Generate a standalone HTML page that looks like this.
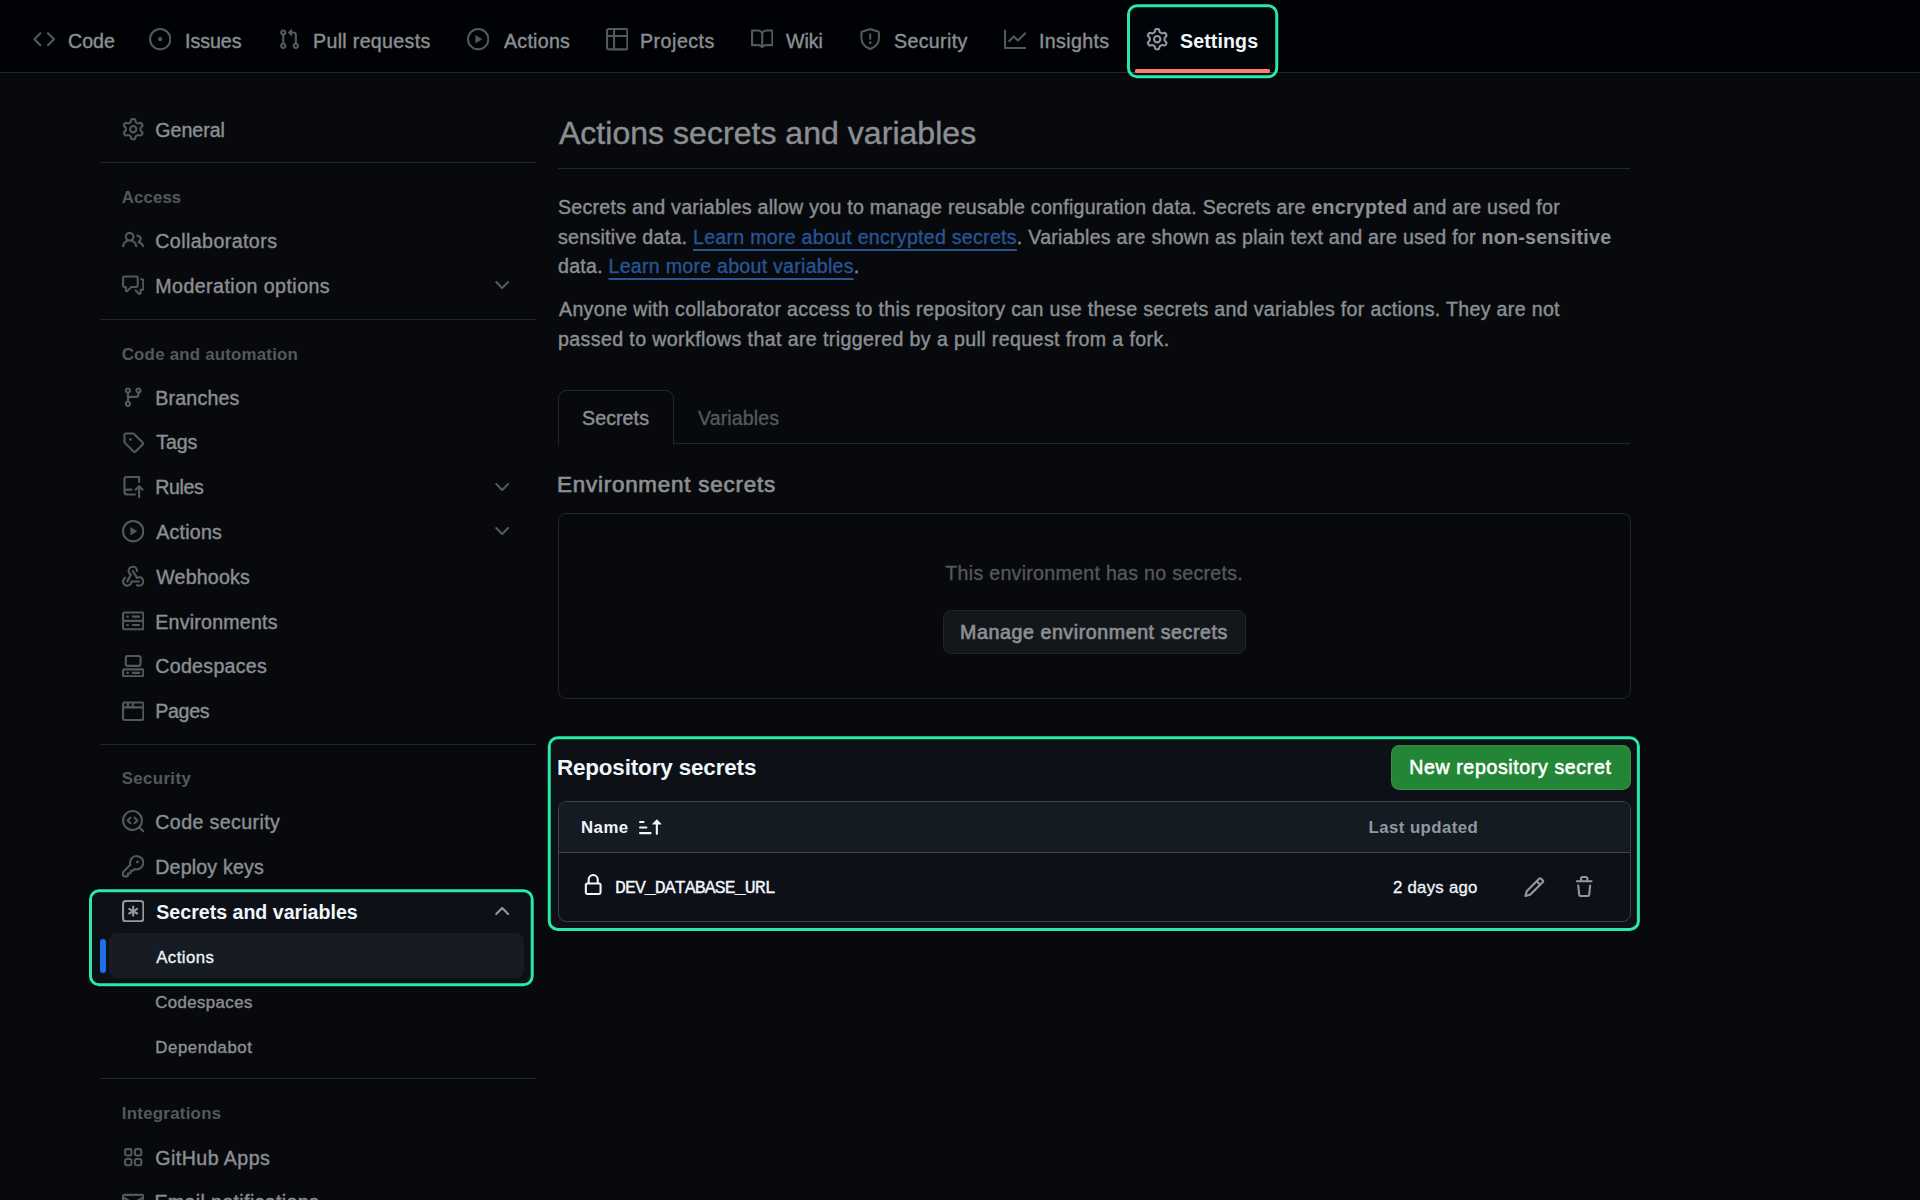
<!DOCTYPE html>
<html><head><meta charset="utf-8"><style>
html,body{margin:0;padding:0;width:1920px;height:1200px;overflow:hidden;background:#0d1117;}
body{position:relative;font-family:"Liberation Sans",sans-serif;}
.t{position:absolute;white-space:nowrap;}
.w4{-webkit-text-stroke:0.3px currentColor;}
.w4 b{-webkit-text-stroke:0;}
.w6{font-weight:400 !important;-webkit-text-stroke:0.6px currentColor;}
.t b{font-weight:700;}
.t a{color:#4493f8;text-decoration:underline;text-underline-offset:4.6px;text-decoration-thickness:1.6px;}
.r{position:absolute;box-sizing:border-box;}
.i{position:absolute;}
</style></head><body>
<div class="r" style="left:0px;top:0px;width:1920px;height:72px;background:#010409;"></div>
<div class="r" style="left:0px;top:72px;width:1920px;height:1px;background:#3d444d;"></div>
<svg class="i" style="left:33.2px;top:28.4px;width:22.4px;height:22.4px" viewBox="0 0 16 16"><path fill="#9198a1" d="M4.72 3.22a.75.75 0 0 1 1.06 1.06L2.06 8l3.72 3.72a.75.75 0 1 1-1.06 1.06L.47 8.53a.75.75 0 0 1 0-1.06Zm6.56 0a.75.75 0 1 0-1.06 1.06L13.94 8l-3.72 3.72a.75.75 0 1 0 1.06 1.06l4.25-4.25a.75.75 0 0 0 0-1.06Z"/></svg>
<div class="t w4" id="t1" style="top:31.50px;font-size:19.6px;line-height:19.6px;color:#f0f6fc;font-weight:400;font-family:'Liberation Sans', sans-serif;letter-spacing:0.034px;left:68.0px;">Code</div>
<svg class="i" style="left:149.0px;top:28.4px;width:22.4px;height:22.4px" viewBox="0 0 16 16"><path fill="#9198a1" d="M8 9.5a1.5 1.5 0 1 0 0-3 1.5 1.5 0 0 0 0 3ZM8 0a8 8 0 1 1 0 16A8 8 0 0 1 8 0ZM1.5 8a6.5 6.5 0 1 0 13 0 6.5 6.5 0 0 0-13 0Z"/></svg>
<div class="t w4" id="t2" style="top:31.50px;font-size:19.6px;line-height:19.6px;color:#f0f6fc;font-weight:400;font-family:'Liberation Sans', sans-serif;letter-spacing:-0.020px;left:185.0px;">Issues</div>
<svg class="i" style="left:277.9px;top:28.4px;width:22.4px;height:22.4px" viewBox="0 0 16 16"><path fill="#9198a1" d="M1.5 3.25a2.25 2.25 0 1 1 3 2.122v5.256a2.251 2.251 0 1 1-1.5 0V5.372A2.25 2.25 0 0 1 1.5 3.25Zm5.677-.177L9.573.677A.25.25 0 0 1 10 .854V2.5h1A2.5 2.5 0 0 1 13.5 5v5.628a2.251 2.251 0 1 1-1.5 0V5a1 1 0 0 0-1-1h-1v1.646a.25.25 0 0 1-.427.177L7.177 3.427a.25.25 0 0 1 0-.354ZM3.75 2.5a.75.75 0 1 0 0 1.5.75.75 0 0 0 0-1.5Zm0 9.5a.75.75 0 1 0 0 1.5.75.75 0 0 0 0-1.5Zm8.25.75a.75.75 0 1 0 1.5 0 .75.75 0 0 0-1.5 0Z"/></svg>
<div class="t w4" id="t3" style="top:31.50px;font-size:19.6px;line-height:19.6px;color:#f0f6fc;font-weight:400;font-family:'Liberation Sans', sans-serif;letter-spacing:0.333px;left:313.0px;">Pull requests</div>
<svg class="i" style="left:467.1px;top:28.4px;width:22.4px;height:22.4px" viewBox="0 0 16 16"><path fill="#9198a1" d="M8 0a8 8 0 1 1 0 16A8 8 0 0 1 8 0ZM1.5 8a6.5 6.5 0 1 0 13 0 6.5 6.5 0 0 0-13 0Zm4.879-2.773 4.264 2.559a.25.25 0 0 1 0 .428l-4.264 2.559A.25.25 0 0 1 6 10.559V5.442a.25.25 0 0 1 .379-.215Z"/></svg>
<div class="t w4" id="t4" style="top:31.50px;font-size:19.6px;line-height:19.6px;color:#f0f6fc;font-weight:400;font-family:'Liberation Sans', sans-serif;letter-spacing:0.267px;left:504.0px;">Actions</div>
<svg class="i" style="left:606.0px;top:28.4px;width:22.4px;height:22.4px" viewBox="0 0 16 16"><path fill="#9198a1" d="M0 1.75C0 .784.784 0 1.75 0h12.5C15.216 0 16 .784 16 1.75v12.5A1.75 1.75 0 0 1 14.25 16H1.75A1.75 1.75 0 0 1 0 14.25ZM6.5 6.5v8h7.75a.25.25 0 0 0 .25-.25V6.5Zm8-1.5V1.75a.25.25 0 0 0-.25-.25H6.5V5Zm-13 1.5v7.75c0 .138.112.25.25.25H5v-8ZM5 5V1.5H1.75a.25.25 0 0 0-.25.25V5Z"/></svg>
<div class="t w4" id="t5" style="top:31.50px;font-size:19.6px;line-height:19.6px;color:#f0f6fc;font-weight:400;font-family:'Liberation Sans', sans-serif;letter-spacing:0.514px;left:640.0px;">Projects</div>
<svg class="i" style="left:750.6px;top:28.4px;width:22.4px;height:22.4px" viewBox="0 0 16 16"><path fill="#9198a1" d="M0 1.75A.75.75 0 0 1 .75 1h4.253c1.227 0 2.317.59 3 1.501A3.743 3.743 0 0 1 11.006 1h4.245a.75.75 0 0 1 .75.75v10.5a.75.75 0 0 1-.75.75h-4.507a2.25 2.25 0 0 0-1.591.659l-.622.621a.75.75 0 0 1-1.06 0l-.622-.621A2.25 2.25 0 0 0 5.258 13H.75a.75.75 0 0 1-.75-.75Zm7.251 10.324.004-5.073-.002-2.253A2.25 2.25 0 0 0 5.003 2.5H1.5v9h3.757a3.75 3.75 0 0 1 1.994.574ZM8.755 4.75l-.004 7.322a3.752 3.752 0 0 1 1.992-.572H14.5v-9h-3.495a2.25 2.25 0 0 0-2.25 2.25Z"/></svg>
<div class="t w4" id="t6" style="top:31.50px;font-size:19.6px;line-height:19.6px;color:#f0f6fc;font-weight:400;font-family:'Liberation Sans', sans-serif;letter-spacing:-0.034px;left:786.0px;">Wiki</div>
<svg class="i" style="left:859.2px;top:28.4px;width:22.4px;height:22.4px" viewBox="0 0 16 16"><path fill="#9198a1" d="M7.467.133a1.748 1.748 0 0 1 1.066 0l5.25 1.68A1.75 1.75 0 0 1 15 3.48V7c0 1.566-.32 3.182-1.303 4.682-.983 1.498-2.585 2.813-5.032 3.855a1.697 1.697 0 0 1-1.33 0c-2.447-1.042-4.049-2.357-5.032-3.855C1.32 10.182 1 8.566 1 7V3.48a1.755 1.755 0 0 1 1.217-1.667Zm.61 1.429a.25.25 0 0 0-.153 0l-5.25 1.68a.25.25 0 0 0-.174.238V7c0 1.358.275 2.666 1.057 3.86.784 1.194 2.121 2.34 4.366 3.297a.196.196 0 0 0 .154 0c2.245-.956 3.582-2.104 4.366-3.298C13.225 9.666 13.5 8.36 13.5 7V3.48a.251.251 0 0 0-.174-.237l-5.25-1.68ZM8.75 4.75v3a.75.75 0 0 1-1.5 0v-3a.75.75 0 0 1 1.5 0ZM9 10.5a1 1 0 1 1-2 0 1 1 0 0 1 2 0Z"/></svg>
<div class="t w4" id="t7" style="top:31.50px;font-size:19.6px;line-height:19.6px;color:#f0f6fc;font-weight:400;font-family:'Liberation Sans', sans-serif;letter-spacing:0.357px;left:894.0px;">Security</div>
<svg class="i" style="left:1004.1px;top:28.4px;width:22.4px;height:22.4px" viewBox="0 0 16 16"><path fill="#9198a1" d="M1.5 1.75V13.5h13.75a.75.75 0 0 1 0 1.5H.75a.75.75 0 0 1-.75-.75V1.75a.75.75 0 0 1 1.5 0Zm14.28 2.53-5.25 5.25a.75.75 0 0 1-1.06 0L7 7.06 4.28 9.78a.751.751 0 0 1-1.042-.018.751.751 0 0 1-.018-1.042l3.25-3.25a.75.75 0 0 1 1.06 0L10 7.94l4.72-4.72a.751.751 0 0 1 1.042.018.751.751 0 0 1 .018 1.042Z"/></svg>
<div class="t w4" id="t8" style="top:31.50px;font-size:19.6px;line-height:19.6px;color:#f0f6fc;font-weight:400;font-family:'Liberation Sans', sans-serif;letter-spacing:0.357px;left:1039.0px;">Insights</div>
<svg class="i" style="left:1146.2px;top:28.4px;width:22.4px;height:22.4px" viewBox="0 0 16 16"><path fill="#9198a1" d="M8 0a8.2 8.2 0 0 1 .701.031C9.444.095 9.99.645 10.16 1.29l.288 1.107c.018.066.079.158.212.224.231.114.454.243.668.386.123.082.233.09.299.071l1.103-.303c.644-.176 1.392.021 1.82.63.27.385.506.792.704 1.218.315.675.111 1.422-.364 1.891l-.814.806c-.049.048-.098.147-.088.294.016.257.016.515 0 .772-.01.147.038.246.088.294l.814.806c.475.469.679 1.216.364 1.891a7.977 7.977 0 0 1-.704 1.217c-.428.61-1.176.807-1.82.63l-1.102-.302c-.067-.019-.177-.011-.3.071a5.909 5.909 0 0 1-.668.386c-.133.066-.194.158-.211.224l-.29 1.106c-.168.646-.715 1.196-1.458 1.26a8.006 8.006 0 0 1-1.402 0c-.743-.064-1.289-.614-1.458-1.26l-.289-1.106c-.018-.066-.079-.158-.212-.224a5.738 5.738 0 0 1-.668-.386c-.123-.082-.233-.09-.299-.071l-1.103.303c-.644.176-1.392-.021-1.82-.63a8.12 8.12 0 0 1-.704-1.218c-.315-.675-.111-1.422.363-1.891l.815-.806c.05-.048.098-.147.088-.294a6.214 6.214 0 0 1 0-.772c.01-.147-.038-.246-.088-.294l-.815-.806C.635 6.045.431 5.298.746 4.623a7.92 7.92 0 0 1 .704-1.217c.428-.61 1.176-.807 1.82-.63l1.102.302c.067.019.177.011.3-.071.214-.143.437-.272.668-.386.133-.066.194-.158.211-.224l.29-1.106C6.009.645 6.556.095 7.299.03 7.53.01 7.764 0 8 0Zm-.571 1.525c-.036.003-.108.036-.137.146l-.289 1.105c-.147.561-.549.967-.998 1.189-.173.086-.34.183-.5.29-.417.278-.97.423-1.529.27l-1.103-.303c-.109-.03-.175.016-.195.045-.22.312-.412.644-.573.99-.014.031-.021.11.059.19l.815.806c.411.406.562.957.53 1.456a4.709 4.709 0 0 0 0 .582c.032.499-.119 1.05-.53 1.456l-.815.806c-.081.08-.073.159-.059.19.162.346.353.677.573.989.02.03.085.076.195.046l1.102-.303c.56-.153 1.113-.008 1.53.27.161.107.328.204.501.29.447.222.85.629.997 1.189l.289 1.105c.029.109.101.143.137.146a6.6 6.6 0 0 0 1.142 0c.036-.003.108-.036.137-.146l.289-1.105c.147-.561.549-.967.998-1.189.173-.086.34-.183.5-.29.417-.278.97-.423 1.529-.27l1.103.303c.109.029.175-.016.195-.045.22-.313.411-.644.573-.99.014-.031.021-.11-.059-.19l-.815-.806c-.411-.406-.562-.957-.53-1.456a4.709 4.709 0 0 0 0-.582c-.032-.499.119-1.05.53-1.456l.815-.806c.081-.08.073-.159.059-.19a6.464 6.464 0 0 0-.573-.989c-.02-.03-.085-.076-.195-.046l-1.102.303c-.56.153-1.113.008-1.53-.27a4.44 4.44 0 0 0-.501-.29c-.447-.222-.85-.629-.997-1.189l-.289-1.105c-.029-.11-.101-.143-.137-.146a6.6 6.6 0 0 0-1.142 0ZM11 8a3 3 0 1 1-6 0 3 3 0 0 1 6 0ZM9.5 8a1.5 1.5 0 1 0-3.001.001A1.5 1.5 0 0 0 9.5 8Z"/></svg>
<div class="t" id="t9" style="top:31.50px;font-size:19.6px;line-height:19.6px;color:#f0f6fc;font-weight:700;font-family:'Liberation Sans', sans-serif;letter-spacing:0.115px;left:1180.0px;">Settings</div>
<div class="r" style="left:1135px;top:69.3px;width:135px;height:3.6000000000000085px;background:#f78166;border-radius:1.5px;"></div>
<svg class="i" style="left:122px;top:118.30000000000001px;width:22.4px;height:22.4px" viewBox="0 0 16 16"><path fill="#9198a1" d="M8 0a8.2 8.2 0 0 1 .701.031C9.444.095 9.99.645 10.16 1.29l.288 1.107c.018.066.079.158.212.224.231.114.454.243.668.386.123.082.233.09.299.071l1.103-.303c.644-.176 1.392.021 1.82.63.27.385.506.792.704 1.218.315.675.111 1.422-.364 1.891l-.814.806c-.049.048-.098.147-.088.294.016.257.016.515 0 .772-.01.147.038.246.088.294l.814.806c.475.469.679 1.216.364 1.891a7.977 7.977 0 0 1-.704 1.217c-.428.61-1.176.807-1.82.63l-1.102-.302c-.067-.019-.177-.011-.3.071a5.909 5.909 0 0 1-.668.386c-.133.066-.194.158-.211.224l-.29 1.106c-.168.646-.715 1.196-1.458 1.26a8.006 8.006 0 0 1-1.402 0c-.743-.064-1.289-.614-1.458-1.26l-.289-1.106c-.018-.066-.079-.158-.212-.224a5.738 5.738 0 0 1-.668-.386c-.123-.082-.233-.09-.299-.071l-1.103.303c-.644.176-1.392-.021-1.82-.63a8.12 8.12 0 0 1-.704-1.218c-.315-.675-.111-1.422.363-1.891l.815-.806c.05-.048.098-.147.088-.294a6.214 6.214 0 0 1 0-.772c.01-.147-.038-.246-.088-.294l-.815-.806C.635 6.045.431 5.298.746 4.623a7.92 7.92 0 0 1 .704-1.217c.428-.61 1.176-.807 1.82-.63l1.102.302c.067.019.177.011.3-.071.214-.143.437-.272.668-.386.133-.066.194-.158.211-.224l.29-1.106C6.009.645 6.556.095 7.299.03 7.53.01 7.764 0 8 0Zm-.571 1.525c-.036.003-.108.036-.137.146l-.289 1.105c-.147.561-.549.967-.998 1.189-.173.086-.34.183-.5.29-.417.278-.97.423-1.529.27l-1.103-.303c-.109-.03-.175.016-.195.045-.22.312-.412.644-.573.99-.014.031-.021.11.059.19l.815.806c.411.406.562.957.53 1.456a4.709 4.709 0 0 0 0 .582c.032.499-.119 1.05-.53 1.456l-.815.806c-.081.08-.073.159-.059.19.162.346.353.677.573.989.02.03.085.076.195.046l1.102-.303c.56-.153 1.113-.008 1.53.27.161.107.328.204.501.29.447.222.85.629.997 1.189l.289 1.105c.029.109.101.143.137.146a6.6 6.6 0 0 0 1.142 0c.036-.003.108-.036.137-.146l.289-1.105c.147-.561.549-.967.998-1.189.173-.086.34-.183.5-.29.417-.278.97-.423 1.529-.27l1.103.303c.109.029.175-.016.195-.045.22-.313.411-.644.573-.99.014-.031.021-.11-.059-.19l-.815-.806c-.411-.406-.562-.957-.53-1.456a4.709 4.709 0 0 0 0-.582c-.032-.499.119-1.05.53-1.456l.815-.806c.081-.08.073-.159.059-.19a6.464 6.464 0 0 0-.573-.989c-.02-.03-.085-.076-.195-.046l-1.102.303c-.56.153-1.113.008-1.53-.27a4.44 4.44 0 0 0-.501-.29c-.447-.222-.85-.629-.997-1.189l-.289-1.105c-.029-.11-.101-.143-.137-.146a6.6 6.6 0 0 0-1.142 0ZM11 8a3 3 0 1 1-6 0 3 3 0 0 1 6 0ZM9.5 8a1.5 1.5 0 1 0-3.001.001A1.5 1.5 0 0 0 9.5 8Z"/></svg>
<div class="t w4" id="t10" style="top:120.90px;font-size:19.6px;line-height:19.6px;color:#f0f6fc;font-weight:400;font-family:'Liberation Sans', sans-serif;letter-spacing:-0.009px;left:155.3px;">General</div>
<div class="r" style="left:100px;top:162px;width:436px;height:1px;background:#3d444d;"></div>
<div class="t" id="t11" style="top:190.10px;font-size:16.8px;line-height:16.8px;color:#9198a1;font-weight:700;font-family:'Liberation Sans', sans-serif;letter-spacing:0.130px;left:121.75px;">Access</div>
<svg class="i" style="left:122px;top:229.4px;width:22.4px;height:22.4px" viewBox="0 0 16 16"><path fill="#9198a1" d="M2 5.5a3.5 3.5 0 1 1 5.898 2.549 5.508 5.508 0 0 1 3.034 4.084.75.75 0 1 1-1.482.235 4 4 0 0 0-7.9 0 .75.75 0 0 1-1.482-.236A5.507 5.507 0 0 1 3.102 8.05 3.493 3.493 0 0 1 2 5.5ZM11 4a3.001 3.001 0 0 1 2.22 5.018 5.01 5.01 0 0 1 2.56 3.012.749.749 0 0 1-.885.954.752.752 0 0 1-.549-.514 3.507 3.507 0 0 0-2.522-2.372.75.75 0 0 1-.574-.73v-.352a.75.75 0 0 1 .416-.672A1.5 1.5 0 0 0 11 5.5.75.75 0 0 1 11 4Zm-5.5-.5a2 2 0 1 0-.001 3.999A2 2 0 0 0 5.5 3.5Z"/></svg>
<div class="t w4" id="t12" style="top:232.00px;font-size:19.6px;line-height:19.6px;color:#f0f6fc;font-weight:400;font-family:'Liberation Sans', sans-serif;letter-spacing:0.425px;left:155.3px;">Collaborators</div>
<svg class="i" style="left:122px;top:274.29999999999995px;width:22.4px;height:22.4px" viewBox="0 0 16 16"><path fill="#9198a1" d="M1.75 1h8.5c.966 0 1.75.784 1.75 1.75v5.5A1.75 1.75 0 0 1 10.25 10H7.061l-2.574 2.573A1.458 1.458 0 0 1 2 11.543V10h-.25A1.75 1.75 0 0 1 0 8.25v-5.5C0 1.784.784 1 1.75 1ZM1.5 2.75v5.5c0 .138.112.25.25.25h1a.75.75 0 0 1 .75.75v2.19l2.72-2.72a.749.749 0 0 1 .53-.22h3.5a.25.25 0 0 0 .25-.25v-5.5a.25.25 0 0 0-.25-.25h-8.5a.25.25 0 0 0-.25.25Zm13 2a.25.25 0 0 0-.25-.25h-.5a.75.75 0 0 1 0-1.5h.5c.966 0 1.75.784 1.75 1.75v5.5A1.75 1.75 0 0 1 14.25 12H14v1.543a1.458 1.458 0 0 1-2.487 1.03L9.22 12.28a.749.749 0 0 1 .326-1.275.749.749 0 0 1 .734.215l2.22 2.22v-2.19a.75.75 0 0 1 .75-.75h1a.25.25 0 0 0 .25-.25Z"/></svg>
<div class="t w4" id="t13" style="top:276.90px;font-size:19.6px;line-height:19.6px;color:#f0f6fc;font-weight:400;font-family:'Liberation Sans', sans-serif;letter-spacing:0.452px;left:155.3px;">Moderation options</div>
<svg class="i" style="left:490.6px;top:274.29999999999995px;width:22.4px;height:22.4px" viewBox="0 0 16 16"><path fill="#9198a1" d="M12.78 5.22a.749.749 0 0 1 0 1.06l-4.25 4.25a.749.749 0 0 1-1.06 0L3.22 6.28a.749.749 0 1 1 1.06-1.06L8 8.939l3.72-3.719a.749.749 0 0 1 1.06 0Z"/></svg>
<div class="r" style="left:100px;top:318.5px;width:436px;height:1.0px;background:#3d444d;"></div>
<div class="t" id="t14" style="top:346.80px;font-size:16.8px;line-height:16.8px;color:#9198a1;font-weight:700;font-family:'Liberation Sans', sans-serif;letter-spacing:0.252px;left:121.75px;">Code and automation</div>
<svg class="i" style="left:122px;top:385.9px;width:22.4px;height:22.4px" viewBox="0 0 16 16"><path fill="#9198a1" d="M9.5 3.25a2.25 2.25 0 1 1 3 2.122V6A2.5 2.5 0 0 1 10 8.5H6a1 1 0 0 0-1 1v1.128a2.251 2.251 0 1 1-1.5 0V5.372a2.25 2.25 0 1 1 1.5 0v1.836A2.493 2.493 0 0 1 6 7h4a1 1 0 0 0 1-1v-.628A2.25 2.25 0 0 1 9.5 3.25Zm-6 0a.75.75 0 1 0 1.5 0 .75.75 0 0 0-1.5 0Zm8.25-.75a.75.75 0 1 0 0 1.5.75.75 0 0 0 0-1.5ZM4.25 12a.75.75 0 1 0 0 1.5.75.75 0 0 0 0-1.5Z"/></svg>
<div class="t w4" id="t15" style="top:388.50px;font-size:19.6px;line-height:19.6px;color:#f0f6fc;font-weight:400;font-family:'Liberation Sans', sans-serif;letter-spacing:0.186px;left:155.3px;">Branches</div>
<svg class="i" style="left:122px;top:430.7px;width:22.4px;height:22.4px" viewBox="0 0 16 16"><path fill="#9198a1" d="M1 7.775V2.75C1 1.784 1.784 1 2.75 1h5.025c.464 0 .91.184 1.238.513l6.25 6.25a1.75 1.75 0 0 1 0 2.474l-5.026 5.026a1.75 1.75 0 0 1-2.474 0l-6.25-6.25A1.752 1.752 0 0 1 1 7.775Zm1.5 0c0 .066.026.13.073.177l6.25 6.25a.25.25 0 0 0 .354 0l5.025-5.025a.25.25 0 0 0 0-.354l-6.25-6.25a.25.25 0 0 0-.177-.073H2.75a.25.25 0 0 0-.25.25ZM6 5a1 1 0 1 1 0 2 1 1 0 0 1 0-2Z"/></svg>
<div class="t w4" id="t16" style="top:433.30px;font-size:19.6px;line-height:19.6px;color:#f0f6fc;font-weight:400;font-family:'Liberation Sans', sans-serif;letter-spacing:-0.134px;left:156.3px;">Tags</div>
<svg class="i" style="left:122px;top:475.5px;width:22.4px;height:22.4px" viewBox="0 0 16 16"><path fill="#9198a1" d="M1 2.5A2.5 2.5 0 0 1 3.5 0h8.75a.75.75 0 0 1 .75.75v3.5a.75.75 0 0 1-1.5 0V1.5h-8a1 1 0 0 0-1 1v6.708A2.492 2.492 0 0 1 3.5 9h3.25a.75.75 0 0 1 0 1.5H3.5a1 1 0 0 0 0 2h5.75a.75.75 0 0 1 0 1.5H3.5A2.5 2.5 0 0 1 1 11.5Zm13.23 7.79h-.001l-1.224-1.224v6.184a.75.75 0 0 1-1.5 0V9.066L10.28 10.29a.75.75 0 0 1-1.06-1.061l2.505-2.504a.75.75 0 0 1 1.06 0L15.29 9.23a.751.751 0 0 1-.018 1.042.751.751 0 0 1-1.042.018Z"/></svg>
<div class="t w4" id="t17" style="top:478.10px;font-size:19.6px;line-height:19.6px;color:#f0f6fc;font-weight:400;font-family:'Liberation Sans', sans-serif;letter-spacing:-0.375px;left:155.3px;">Rules</div>
<svg class="i" style="left:490.6px;top:475.5px;width:22.4px;height:22.4px" viewBox="0 0 16 16"><path fill="#9198a1" d="M12.78 5.22a.749.749 0 0 1 0 1.06l-4.25 4.25a.749.749 0 0 1-1.06 0L3.22 6.28a.749.749 0 1 1 1.06-1.06L8 8.939l3.72-3.719a.749.749 0 0 1 1.06 0Z"/></svg>
<svg class="i" style="left:122px;top:520.3px;width:22.4px;height:22.4px" viewBox="0 0 16 16"><path fill="#9198a1" d="M8 0a8 8 0 1 1 0 16A8 8 0 0 1 8 0ZM1.5 8a6.5 6.5 0 1 0 13 0 6.5 6.5 0 0 0-13 0Zm4.879-2.773 4.264 2.559a.25.25 0 0 1 0 .428l-4.264 2.559A.25.25 0 0 1 6 10.559V5.442a.25.25 0 0 1 .379-.215Z"/></svg>
<div class="t w4" id="t18" style="top:522.90px;font-size:19.6px;line-height:19.6px;color:#f0f6fc;font-weight:400;font-family:'Liberation Sans', sans-serif;letter-spacing:0.217px;left:156.3px;">Actions</div>
<svg class="i" style="left:490.6px;top:520.3px;width:22.4px;height:22.4px" viewBox="0 0 16 16"><path fill="#9198a1" d="M12.78 5.22a.749.749 0 0 1 0 1.06l-4.25 4.25a.749.749 0 0 1-1.06 0L3.22 6.28a.749.749 0 1 1 1.06-1.06L8 8.939l3.72-3.719a.749.749 0 0 1 1.06 0Z"/></svg>
<svg class="i" style="left:122px;top:565.0999999999999px;width:22.4px;height:22.4px" viewBox="0 0 16 16"><path fill="#9198a1" d="M5.5 4.25a2.25 2.25 0 0 1 4.5 0 .75.75 0 0 0 1.5 0 3.75 3.75 0 1 0-6.14 2.889l-2.272 4.258a.75.75 0 0 0 1.324.706L7 7.25a.75.75 0 0 0-.309-1.015A2.25 2.25 0 0 1 5.5 4.25ZM7.364 3.607a.75.75 0 0 1 1.03.257l2.608 4.349a3.75 3.75 0 1 1-.628 6.785.75.75 0 0 1 .752-1.299 2.25 2.25 0 1 0-.033-3.88.75.75 0 0 1-1.03-.256L7.107 4.636a.75.75 0 0 1 .257-1.03ZM2.9 8.776A.75.75 0 0 1 2.625 9.8 2.25 2.25 0 1 0 6 11.75a.75.75 0 0 1 .75-.751h5.5a.75.75 0 0 1 0 1.5H7.425a3.751 3.751 0 1 1-5.55-3.998.75.75 0 0 1 1.024.274Z"/></svg>
<div class="t w4" id="t19" style="top:567.70px;font-size:19.6px;line-height:19.6px;color:#f0f6fc;font-weight:400;font-family:'Liberation Sans', sans-serif;letter-spacing:0.171px;left:156.3px;">Webhooks</div>
<svg class="i" style="left:122px;top:609.8999999999999px;width:22.4px;height:22.4px" viewBox="0 0 16 16"><path fill="#9198a1" d="M1.75 1h12.5c.966 0 1.75.784 1.75 1.75v4c0 .372-.116.717-.314 1 .198.283.314.628.314 1v4a1.75 1.75 0 0 1-1.75 1.75H1.75A1.75 1.75 0 0 1 0 12.75v-4c0-.358.109-.707.314-1a1.739 1.739 0 0 1-.314-1v-4C0 1.784.784 1 1.75 1ZM1.5 2.75v4c0 .138.112.25.25.25h12.5a.25.25 0 0 0 .25-.25v-4a.25.25 0 0 0-.25-.25H1.75a.25.25 0 0 0-.25.25Zm.25 5.75a.25.25 0 0 0-.25.25v4c0 .138.112.25.25.25h12.5a.25.25 0 0 0 .25-.25v-4a.25.25 0 0 0-.25-.25ZM7 4.75A.75.75 0 0 1 7.75 4h4.5a.75.75 0 0 1 0 1.5h-4.5A.75.75 0 0 1 7 4.75ZM7.75 10h4.5a.75.75 0 0 1 0 1.5h-4.5a.75.75 0 0 1 0-1.5ZM3 4.75A.75.75 0 0 1 3.75 4h.5a.75.75 0 0 1 0 1.5h-.5A.75.75 0 0 1 3 4.75ZM3.75 10h.5a.75.75 0 0 1 0 1.5h-.5a.75.75 0 0 1 0-1.5Z"/></svg>
<div class="t w4" id="t20" style="top:612.50px;font-size:19.6px;line-height:19.6px;color:#f0f6fc;font-weight:400;font-family:'Liberation Sans', sans-serif;letter-spacing:0.217px;left:155.3px;">Environments</div>
<svg class="i" style="left:122px;top:654.6999999999998px;width:22.4px;height:22.4px" viewBox="0 0 16 16"><path fill="#9198a1" d="M0 11.25c0-.966.784-1.75 1.75-1.75h12.5c.966 0 1.75.784 1.75 1.75v3A1.75 1.75 0 0 1 14.25 16H1.75A1.75 1.75 0 0 1 0 14.25Zm2-9.5C2 .784 2.784 0 3.75 0h8.5C13.216 0 14 .784 14 1.75v5a1.75 1.75 0 0 1-1.75 1.75h-8.5A1.75 1.75 0 0 1 2 6.75Zm1.75-.25a.25.25 0 0 0-.25.25v5c0 .138.112.25.25.25h8.5a.25.25 0 0 0 .25-.25v-5a.25.25 0 0 0-.25-.25Zm-2 9.5a.25.25 0 0 0-.25.25v3c0 .138.112.25.25.25h12.5a.25.25 0 0 0 .25-.25v-3a.25.25 0 0 0-.25-.25ZM7 12.75a.75.75 0 0 1 .75-.75h4.5a.75.75 0 0 1 0 1.5h-4.5a.75.75 0 0 1-.75-.75Zm-4 0a.75.75 0 0 1 .75-.75h.5a.75.75 0 0 1 0 1.5h-.5a.75.75 0 0 1-.75-.75Z"/></svg>
<div class="t w4" id="t21" style="top:657.30px;font-size:19.6px;line-height:19.6px;color:#f0f6fc;font-weight:400;font-family:'Liberation Sans', sans-serif;letter-spacing:0.288px;left:155.3px;">Codespaces</div>
<svg class="i" style="left:122px;top:699.4999999999998px;width:22.4px;height:22.4px" viewBox="0 0 16 16"><path fill="#9198a1" d="M0 2.75C0 1.784.784 1 1.75 1h12.5c.966 0 1.75.784 1.75 1.75v10.5A1.75 1.75 0 0 1 14.25 15H1.75A1.75 1.75 0 0 1 0 13.25ZM14.5 6h-13v7.25c0 .138.112.25.25.25h12.5a.25.25 0 0 0 .25-.25Zm-6-3.5v2h6V2.75a.25.25 0 0 0-.25-.25ZM5 2.5v2h2v-2Zm-3.25 0a.25.25 0 0 0-.25.25V4.5h2v-2Z"/></svg>
<div class="t w4" id="t22" style="top:702.10px;font-size:19.6px;line-height:19.6px;color:#f0f6fc;font-weight:400;font-family:'Liberation Sans', sans-serif;letter-spacing:-0.325px;left:155.3px;">Pages</div>
<div class="r" style="left:100px;top:743.7px;width:436px;height:1.0px;background:#3d444d;"></div>
<div class="t" id="t23" style="top:771.20px;font-size:16.8px;line-height:16.8px;color:#9198a1;font-weight:700;font-family:'Liberation Sans', sans-serif;letter-spacing:0.393px;left:121.75px;">Security</div>
<svg class="i" style="left:122px;top:810.4px;width:22.4px;height:22.4px" viewBox="0 0 16 16"><path fill="#9198a1" d="M8.47 4.97a.75.75 0 0 0 0 1.06L9.94 7.5 8.47 8.97a.75.75 0 1 0 1.06 1.06l2-2a.75.75 0 0 0 0-1.06l-2-2a.75.75 0 0 0-1.06 0ZM6.53 6.03a.75.75 0 0 0-1.06-1.06l-2 2a.75.75 0 0 0 0 1.06l2 2a.75.75 0 1 0 1.06-1.06L5.06 7.5l1.47-1.47ZM12.246 13.307a7.501 7.501 0 1 1 1.06-1.06l2.474 2.473a.752.752 0 0 1-.018 1.042.752.752 0 0 1-1.042.018ZM1.5 7.5a6 6 0 1 0 12 0 6 6 0 0 0-12 0Z"/></svg>
<div class="t w4" id="t24" style="top:813.00px;font-size:19.6px;line-height:19.6px;color:#f0f6fc;font-weight:400;font-family:'Liberation Sans', sans-serif;letter-spacing:0.392px;left:155.3px;">Code security</div>
<svg class="i" style="left:122px;top:855.1999999999999px;width:22.4px;height:22.4px" viewBox="0 0 16 16"><path fill="#9198a1" d="M10.5 0a5.499 5.499 0 1 1-1.288 10.848l-.932.932a.749.749 0 0 1-.53.22H7v.75a.749.749 0 0 1-.22.53l-.5.5a.749.749 0 0 1-.53.22H5v.75a.749.749 0 0 1-.22.53l-.5.5a.749.749 0 0 1-.53.22h-2A1.75 1.75 0 0 1 0 14.25v-2c0-.199.079-.389.22-.53l4.932-4.932A5.5 5.5 0 0 1 10.5 0Zm-4 5.5c-.001.431.069.86.205 1.269a.75.75 0 0 1-.181.768L1.5 12.56v1.69c0 .138.112.25.25.25h1.69l.06-.06v-1.19a.75.75 0 0 1 .75-.75h1.19l.06-.06v-1.19a.75.75 0 0 1 .75-.75h1.19l1.023-1.025a.75.75 0 0 1 .768-.18A4 4 0 1 0 6.5 5.5ZM11 6a1 1 0 1 1 0-2 1 1 0 0 1 0 2Z"/></svg>
<div class="t w4" id="t25" style="top:857.80px;font-size:19.6px;line-height:19.6px;color:#f0f6fc;font-weight:400;font-family:'Liberation Sans', sans-serif;letter-spacing:0.170px;left:155.3px;">Deploy keys</div>
<div class="r" style="left:109px;top:933px;width:414.70000000000005px;height:45px;background:#171c24;border-radius:8px;"></div>
<div class="r" style="left:99.5px;top:938.5px;width:6.0px;height:34.0px;background:#1f6feb;border-radius:3px;"></div>
<svg class="i" style="left:122px;top:899.9px;width:22.4px;height:22.4px" viewBox="0 0 16 16"><path fill="#9198a1" d="M0 2.75A2.75 2.75 0 0 1 2.75 0h10.5A2.75 2.75 0 0 1 16 2.75v10.5A2.75 2.75 0 0 1 13.25 16H2.75A2.75 2.75 0 0 1 0 13.25ZM2.75 1.5c-.69 0-1.25.56-1.25 1.25v10.5c0 .69.56 1.25 1.25 1.25h10.5c.69 0 1.25-.56 1.25-1.25V2.75c0-.69-.56-1.25-1.25-1.25ZM8 4a.75.75 0 0 1 .75.75V6.7l1.69-.975a.75.75 0 0 1 .75 1.3L9.5 8l1.69.976a.75.75 0 0 1-.75 1.298L8.75 9.3v1.951a.75.75 0 0 1-1.5 0V9.299l-1.69.976a.75.75 0 0 1-.75-1.3L6.5 8l-1.69-.975a.75.75 0 0 1 .75-1.3L7.25 6.7V4.75A.75.75 0 0 1 8 4Z"/></svg>
<div class="t" id="t26" style="top:902.50px;font-size:19.6px;line-height:19.6px;color:#f0f6fc;font-weight:700;font-family:'Liberation Sans', sans-serif;letter-spacing:-0.005px;left:156.3px;">Secrets and variables</div>
<svg class="i" style="left:490.6px;top:899.9px;width:22.4px;height:22.4px" viewBox="0 0 16 16"><path fill="#9198a1" d="M3.22 10.53a.749.749 0 0 1 0-1.06l4.25-4.25a.749.749 0 0 1 1.06 0l4.25 4.25a.749.749 0 1 1-1.06 1.06L8 6.811 4.28 10.53a.749.749 0 0 1-1.06 0Z"/></svg>
<div class="t w4" id="t27" style="top:950.20px;font-size:16.8px;line-height:16.8px;color:#f0f6fc;font-weight:400;font-family:'Liberation Sans', sans-serif;letter-spacing:0.417px;left:156.25px;">Actions</div>
<div class="t w4" id="t28" style="top:995.00px;font-size:16.8px;line-height:16.8px;color:#f0f6fc;font-weight:400;font-family:'Liberation Sans', sans-serif;letter-spacing:0.411px;left:155.3px;">Codespaces</div>
<div class="t w4" id="t29" style="top:1039.60px;font-size:16.8px;line-height:16.8px;color:#f0f6fc;font-weight:400;font-family:'Liberation Sans', sans-serif;letter-spacing:0.578px;left:155.3px;">Dependabot</div>
<div class="r" style="left:100px;top:1078px;width:436px;height:1px;background:#3d444d;"></div>
<div class="t" id="t30" style="top:1106.20px;font-size:16.8px;line-height:16.8px;color:#9198a1;font-weight:700;font-family:'Liberation Sans', sans-serif;letter-spacing:0.296px;left:121.75px;">Integrations</div>
<svg class="i" style="left:122px;top:1145.9px;width:22.4px;height:22.4px" viewBox="0 0 16 16"><path fill="#9198a1" d="M1.5 3.25c0-.966.784-1.75 1.75-1.75h2.5c.966 0 1.75.784 1.75 1.75v2.5A1.75 1.75 0 0 1 5.75 7.5h-2.5A1.75 1.75 0 0 1 1.5 5.75Zm7 0c0-.966.784-1.75 1.75-1.75h2.5c.966 0 1.75.784 1.75 1.75v2.5a1.75 1.75 0 0 1-1.75 1.75h-2.5A1.75 1.75 0 0 1 8.5 5.75Zm-7 7c0-.966.784-1.75 1.75-1.75h2.5c.966 0 1.75.784 1.75 1.75v2.5a1.75 1.75 0 0 1-1.75 1.75h-2.5a1.75 1.75 0 0 1-1.75-1.75Zm7 0c0-.966.784-1.75 1.75-1.75h2.5c.966 0 1.75.784 1.75 1.75v2.5a1.75 1.75 0 0 1-1.75 1.75h-2.5a1.75 1.75 0 0 1-1.75-1.75ZM3.25 3a.25.25 0 0 0-.25.25v2.5c0 .138.112.25.25.25h2.5A.25.25 0 0 0 6 5.75v-2.5A.25.25 0 0 0 5.75 3Zm7 0a.25.25 0 0 0-.25.25v2.5c0 .138.112.25.25.25h2.5a.25.25 0 0 0 .25-.25v-2.5a.25.25 0 0 0-.25-.25ZM3 10.25v2.5c0 .138.112.25.25.25h2.5a.25.25 0 0 0 .25-.25v-2.5a.25.25 0 0 0-.25-.25h-2.5a.25.25 0 0 0-.25.25Zm7.25-.25a.25.25 0 0 0-.25.25v2.5c0 .138.112.25.25.25h2.5a.25.25 0 0 0 .25-.25v-2.5a.25.25 0 0 0-.25-.25Z"/></svg>
<div class="t w4" id="t31" style="top:1148.50px;font-size:19.6px;line-height:19.6px;color:#f0f6fc;font-weight:400;font-family:'Liberation Sans', sans-serif;letter-spacing:0.450px;left:155.3px;">GitHub Apps</div>
<svg class="i" style="left:122px;top:1190.7px;width:22.4px;height:22.4px" viewBox="0 0 16 16"><path fill="#9198a1" d="M1.75 2h12.5c.966 0 1.75.784 1.75 1.75v8.5A1.75 1.75 0 0 1 14.25 14H1.75A1.75 1.75 0 0 1 0 12.25v-8.5C0 2.784.784 2 1.75 2ZM1.5 12.251c0 .138.112.25.25.25h12.5a.25.25 0 0 0 .25-.25V5.809L8.38 9.397a.75.75 0 0 1-.76 0L1.5 5.809v6.442Zm13-8.181v-.32a.25.25 0 0 0-.25-.25H1.75a.25.25 0 0 0-.25.25v.32L8 7.88Z"/></svg>
<div class="t w4" id="t32" style="top:1193.30px;font-size:19.6px;line-height:19.6px;color:#f0f6fc;font-weight:400;font-family:'Liberation Sans', sans-serif;letter-spacing:0.367px;left:154.4px;">Email notifications</div>
<div class="t w4" id="t33" style="top:117.40px;font-size:32px;line-height:32px;color:#f0f6fc;font-weight:400;font-family:'Liberation Sans', sans-serif;letter-spacing:0.039px;left:558.9px;">Actions secrets and variables</div>
<div class="r" style="left:558px;top:168px;width:1072px;height:1px;background:#3d444d;"></div>
<div class="t w4" id="t34" style="top:198.40px;font-size:19.6px;line-height:19.6px;color:#f0f6fc;font-weight:400;font-family:'Liberation Sans', sans-serif;letter-spacing:0.259px;left:558.0px;">Secrets and variables allow you to manage reusable configuration data. Secrets are <b>encrypted</b> and are used for</div>
<div class="t w4" id="t35" style="top:227.80px;font-size:19.6px;line-height:19.6px;color:#f0f6fc;font-weight:400;font-family:'Liberation Sans', sans-serif;letter-spacing:0.267px;left:558.0px;">sensitive data. <a>Learn more about encrypted secrets</a>. Variables are shown as plain text and are used for <b>non-sensitive</b></div>
<div class="t w4" id="t36" style="top:257.20px;font-size:19.6px;line-height:19.6px;color:#f0f6fc;font-weight:400;font-family:'Liberation Sans', sans-serif;letter-spacing:0.256px;left:558.0px;">data. <a>Learn more about variables</a>.</div>
<div class="t w4" id="t37" style="top:300.40px;font-size:19.6px;line-height:19.6px;color:#f0f6fc;font-weight:400;font-family:'Liberation Sans', sans-serif;letter-spacing:0.324px;left:559.0px;">Anyone with collaborator access to this repository can use these secrets and variables for actions. They are not</div>
<div class="t w4" id="t38" style="top:329.80px;font-size:19.6px;line-height:19.6px;color:#f0f6fc;font-weight:400;font-family:'Liberation Sans', sans-serif;letter-spacing:0.386px;left:558.0px;">passed to workflows that are triggered by a pull request from a fork.</div>
<div class="r" style="left:558px;top:443px;width:1072px;height:1px;background:#3d444d;"></div>
<div class="r" style="left:558px;top:389.5px;width:115.5px;height:55.5px;background:#0d1117;border:1px solid #3d444d;border-radius:8.4px;border-bottom:none;border-bottom-left-radius:0;border-bottom-right-radius:0;"></div>
<div class="t w4" id="t39" style="top:408.70px;font-size:19.6px;line-height:19.6px;color:#f0f6fc;font-weight:400;font-family:'Liberation Sans', sans-serif;letter-spacing:0.083px;left:582.0px;">Secrets</div>
<div class="t w4" id="t40" style="top:408.70px;font-size:19.6px;line-height:19.6px;color:#9198a1;font-weight:400;font-family:'Liberation Sans', sans-serif;letter-spacing:0.100px;left:698.0px;">Variables</div>
<div class="t w6" id="t41" style="top:473.70px;font-size:22.4px;line-height:22.4px;color:#f0f6fc;font-weight:600;font-family:'Liberation Sans', sans-serif;letter-spacing:0.778px;left:557.0px;">Environment secrets</div>
<div class="r" style="left:557.5px;top:512.5px;width:1073.0px;height:186.0px;background:none;border:1px solid #3d444d;border-radius:8.4px;"></div>
<div class="t w4" id="t42" style="top:564.00px;font-size:19.6px;line-height:19.6px;color:#9198a1;font-weight:400;font-family:'Liberation Sans', sans-serif;letter-spacing:0.285px;left:494.20000000000005px;width:1200px;text-align:center;">This environment has no secrets.</div>
<div class="r" style="left:942.5px;top:609.5px;width:303.5px;height:44.5px;background:#212830;border:1px solid #3d444d;border-radius:8.4px;"></div>
<div class="t w6" id="t43" style="top:622.50px;font-size:19.6px;line-height:19.6px;color:#f0f6fc;font-weight:600;font-family:'Liberation Sans', sans-serif;letter-spacing:0.584px;left:494.0px;width:1200px;text-align:center;">Manage environment secrets</div>
<div class="t" id="t44" style="top:757.00px;font-size:22.4px;line-height:22.4px;color:#f0f6fc;font-weight:700;font-family:'Liberation Sans', sans-serif;letter-spacing:-0.127px;left:556.9px;">Repository secrets</div>
<div class="r" style="left:1391px;top:745px;width:239.5px;height:44.5px;background:#238636;border:1px solid rgba(240,246,252,0.1);border-radius:8.4px;"></div>
<div class="t w6" id="t45" style="top:758.20px;font-size:19.6px;line-height:19.6px;color:#ffffff;font-weight:600;font-family:'Liberation Sans', sans-serif;letter-spacing:0.610px;left:910.3px;width:1200px;text-align:center;">New repository secret</div>
<div class="r" style="left:557.5px;top:800.5px;width:1073.0px;height:121.0px;background:#0d1117;border:1px solid #3d444d;border-radius:8.4px;overflow:hidden;"></div>
<div class="r" style="left:558.5px;top:801.5px;width:1071.0px;height:50.5px;background:#151b23;border-top-left-radius:7.4px;border-top-right-radius:7.4px;"></div>
<div class="r" style="left:558px;top:852px;width:1072px;height:1px;background:#3d444d;"></div>
<div class="t" id="t46" style="top:820.10px;font-size:16.8px;line-height:16.8px;color:#f0f6fc;font-weight:700;font-family:'Liberation Sans', sans-serif;letter-spacing:0.467px;left:581.0px;">Name</div>
<svg class="i" style="left:639.4px;top:816.2px;width:22.4px;height:22.4px" viewBox="0 0 16 16"><path fill="#f0f6fc" d="m12.927 2.573 3 3A.25.25 0 0 1 15.75 6H13.5v6.75a.75.75 0 0 1-1.5 0V6H9.75a.25.25 0 0 1-.177-.427l3-3a.25.25 0 0 1 .354 0ZM0 12.25a.75.75 0 0 1 .75-.75h7.5a.75.75 0 0 1 0 1.5H.75a.75.75 0 0 1-.75-.75Zm0-4a.75.75 0 0 1 .75-.75h4.5a.75.75 0 0 1 0 1.5H.75A.75.75 0 0 1 0 8.25Zm0-4a.75.75 0 0 1 .75-.75h2.5a.75.75 0 0 1 0 1.5H.75A.75.75 0 0 1 0 4.25Z"/></svg>
<div class="t" id="t47" style="top:819.70px;font-size:16.8px;line-height:16.8px;color:#9198a1;font-weight:700;font-family:'Liberation Sans', sans-serif;letter-spacing:0.437px;right:441.79999999999995px;text-align:right;">Last updated</div>
<svg class="i" style="left:581.5px;top:873.5px;width:22.4px;height:22.4px" viewBox="0 0 16 16"><path fill="#f0f6fc" d="M4 4a4 4 0 0 1 8 0v2h.25c.966 0 1.75.784 1.75 1.75v5.5A1.75 1.75 0 0 1 12.25 15h-8.5A1.75 1.75 0 0 1 2 13.25v-5.5C2 6.784 2.784 6 3.75 6H4Zm8.25 3.5h-8.5a.25.25 0 0 0-.25.25v5.5c0 .138.112.25.25.25h8.5a.25.25 0 0 0 .25-.25v-5.5a.25.25 0 0 0-.25-.25ZM10.5 6V4a2.5 2.5 0 1 0-5 0v2Z"/></svg>
<div class="t w4" id="t48" style="top:878.70px;font-size:18.2px;line-height:18.2px;color:#f0f6fc;font-weight:400;font-family:'Liberation Mono', monospace;letter-spacing:-0.920px;left:614.9px;">DEV_DATABASE_URL</div>
<div class="t w4" id="t49" style="top:880.20px;font-size:16.8px;line-height:16.8px;color:#f0f6fc;font-weight:400;font-family:'Liberation Sans', sans-serif;letter-spacing:0.267px;right:442.29999999999995px;text-align:right;">2 days ago</div>
<svg class="i" style="left:1522.5px;top:875.5px;width:22.4px;height:22.4px" viewBox="0 0 16 16"><path fill="#9198a1" d="M11.013 1.427a1.75 1.75 0 0 1 2.474 0l1.086 1.086a1.75 1.75 0 0 1 0 2.474l-8.61 8.61c-.21.21-.47.364-.756.445l-3.251.93a.75.75 0 0 1-.927-.928l.929-3.25c.081-.286.235-.547.445-.758l8.61-8.61Zm.176 4.823L9.75 4.81l-6.286 6.287a.253.253 0 0 0-.064.108l-.558 1.953 1.953-.558a.253.253 0 0 0 .108-.064Zm1.238-3.763a.25.25 0 0 0-.354 0L10.811 3.75l1.439 1.44 1.263-1.263a.25.25 0 0 0 0-.354Z"/></svg>
<svg class="i" style="left:1572.5px;top:875.5px;width:22.4px;height:22.4px" viewBox="0 0 16 16"><path fill="#9198a1" d="M11 1.75V3h2.25a.75.75 0 0 1 0 1.5H2.75a.75.75 0 0 1 0-1.5H5V1.75C5 .784 5.784 0 6.75 0h2.5C10.216 0 11 .784 11 1.75ZM4.496 6.675l.66 6.6a.25.25 0 0 0 .249.225h5.19a.25.25 0 0 0 .249-.225l.66-6.6a.75.75 0 0 1 1.492.149l-.66 6.6A1.748 1.748 0 0 1 10.595 15h-5.19a1.75 1.75 0 0 1-1.741-1.575l-.66-6.6a.75.75 0 1 1 1.492-.15ZM6.5 1.75V3h3V1.75a.25.25 0 0 0-.25-.25h-2.5a.25.25 0 0 0-.25.25Z"/></svg>
<svg style="position:absolute;left:0;top:0;width:1920px;height:1200px" viewBox="0 0 1920 1200"><path fill-rule="evenodd" fill="rgba(0,0,0,0.42)" d="M0,0H1920V1200H0ZM1137.0,5.75H1268.25A8.5,8.5 0 0 1 1276.75,14.25V68.25A8.5,8.5 0 0 1 1268.25,76.75H1137.0A8.5,8.5 0 0 1 1128.5,68.25V14.25A8.5,8.5 0 0 1 1137.0,5.75ZM99.0,890.75H523.7A8.5,8.5 0 0 1 532.2,899.25V976.2A8.5,8.5 0 0 1 523.7,984.7H99.0A8.5,8.5 0 0 1 90.5,976.2V899.25A8.5,8.5 0 0 1 99.0,890.75ZM557.75,737.75H1629.9A8.5,8.5 0 0 1 1638.4,746.25V920.9A8.5,8.5 0 0 1 1629.9,929.4H557.75A8.5,8.5 0 0 1 549.25,920.9V746.25A8.5,8.5 0 0 1 557.75,737.75Z"/><path fill="none" stroke="#2ae8a6" stroke-width="3" d="M1137.0,5.75H1268.25A8.5,8.5 0 0 1 1276.75,14.25V68.25A8.5,8.5 0 0 1 1268.25,76.75H1137.0A8.5,8.5 0 0 1 1128.5,68.25V14.25A8.5,8.5 0 0 1 1137.0,5.75Z"/><path fill="none" stroke="#2ae8a6" stroke-width="3" d="M99.0,890.75H523.7A8.5,8.5 0 0 1 532.2,899.25V976.2A8.5,8.5 0 0 1 523.7,984.7H99.0A8.5,8.5 0 0 1 90.5,976.2V899.25A8.5,8.5 0 0 1 99.0,890.75Z"/><path fill="none" stroke="#2ae8a6" stroke-width="3" d="M557.75,737.75H1629.9A8.5,8.5 0 0 1 1638.4,746.25V920.9A8.5,8.5 0 0 1 1629.9,929.4H557.75A8.5,8.5 0 0 1 549.25,920.9V746.25A8.5,8.5 0 0 1 557.75,737.75Z"/></svg>
</body></html>
